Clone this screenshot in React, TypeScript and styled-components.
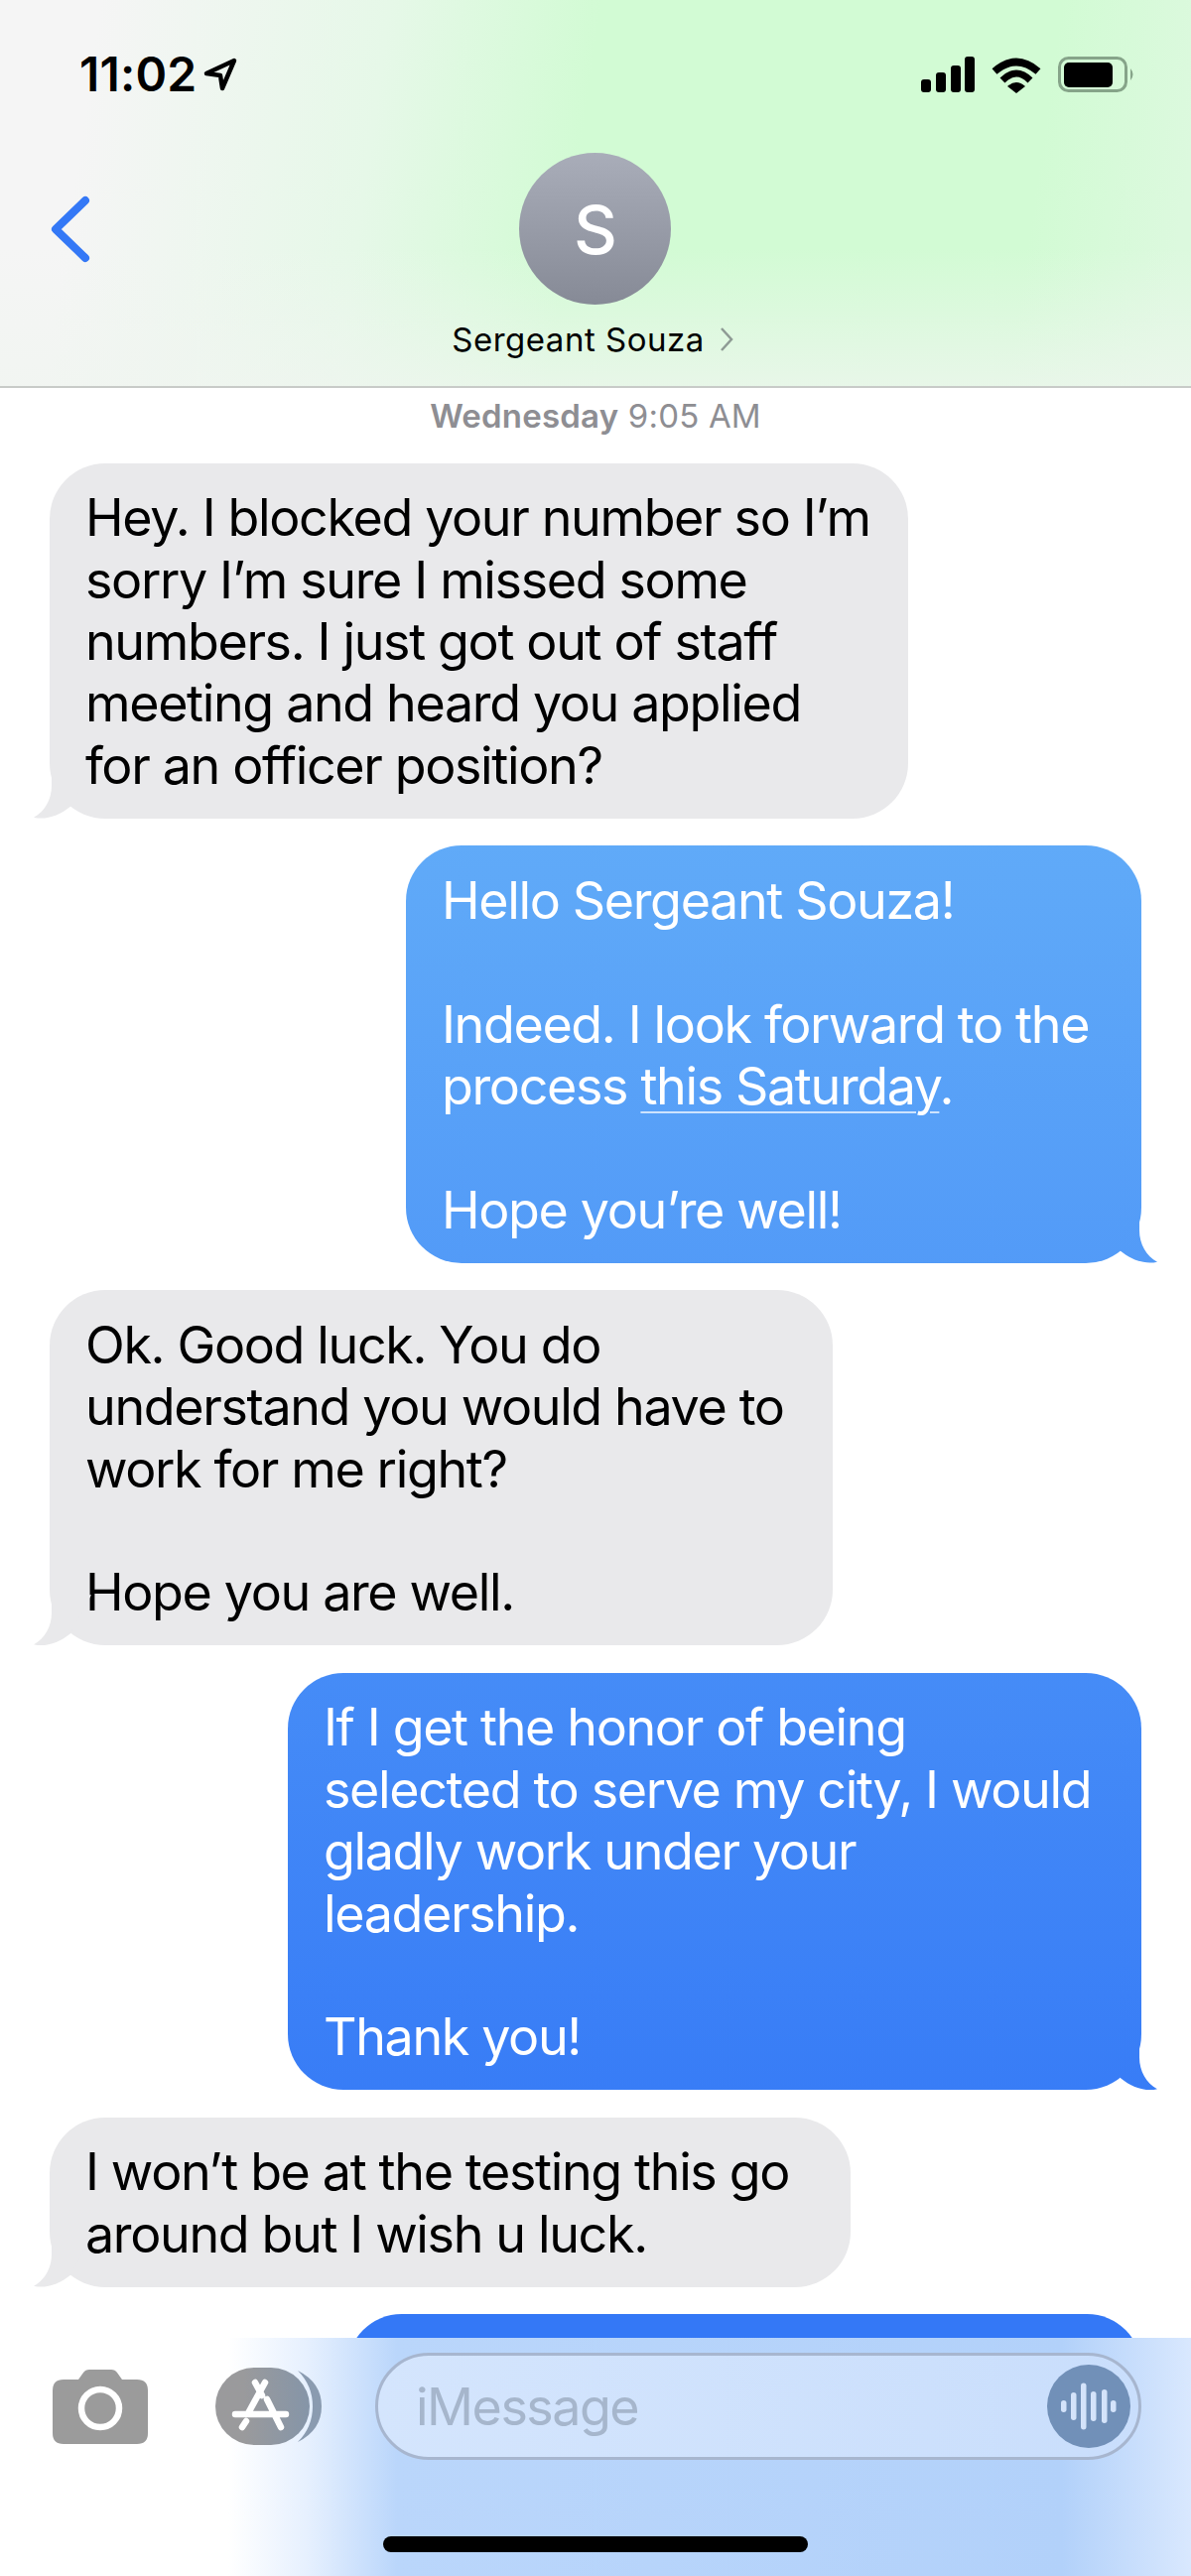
import React from "react";
import styled, { createGlobalStyle } from "styled-components";

const Global = createGlobalStyle`
  html, body { margin: 0; padding: 0; background: #fff; }
  body { font-family: Inter, "Liberation Sans", sans-serif; }
`;

const Screen = styled.div`
  width: 1200px;
  height: 2596px;
  display: flex;
  flex-direction: column;
  overflow: hidden;
  background: #fff;
`;

const Header = styled.header`
  flex: 0 0 391px;
  box-sizing: border-box;
  padding-top: 52px;
  border-bottom: 2px solid #c8cbc8;
  background:
    linear-gradient(180deg, rgba(244,246,244,0) 250px, rgba(240,245,240,0.72) 389px),
    linear-gradient(98deg, #f5f5f5 100px, #e6f8e8 390px, #d2fbd4 600px, #d2fbd4 1060px, #dcf9de 1210px);
`;

const StatusBar = styled.div`
  display: flex;
  justify-content: space-between;
  align-items: center;
  height: 46px;
  padding: 0 56px 0 80px;
  margin-bottom: 56px;
`;

const TimeGroup = styled.div`
  display: flex;
  align-items: center;
  gap: 7px;
`;

const Time = styled.span`
  font-size: 48px;
  font-weight: 600;
  letter-spacing: 0.2px;
  line-height: 46px;
  color: #000;
`;

const StatusIcons = styled.div`
  display: flex;
  align-items: center;
  gap: 17px;
`;

const Contact = styled.div`
  display: grid;
  grid-template-columns: 1fr auto 1fr;
  justify-items: center;
  align-items: center;
  row-gap: 15px;
`;

const BackButton = styled.svg`
  justify-self: start;
  margin-left: 50px;
`;

const Avatar = styled.div`
  width: 153px;
  height: 153px;
  border-radius: 50%;
  display: flex;
  align-items: center;
  justify-content: center;
  background: linear-gradient(180deg, #a9adb9, #868a96);
  color: #fff;
  font-size: 68px;
  font-weight: 500;
`;

const NameRow = styled.div`
  grid-column: 2;
  display: flex;
  align-items: center;
  gap: 15px;
  transform: translateX(-3px);
  white-space: nowrap;
`;

const Name = styled.span`
  font-size: 33px;
  letter-spacing: 0.5px;
  line-height: 40px;
  color: #000;
`;

const Thread = styled.main`
  flex: 1 1 0;
  min-height: 0;
  overflow: hidden;
  box-sizing: border-box;
  padding: 0 50px;
  display: flex;
  flex-direction: column;
  gap: 27.6px;
`;

const Stamp = styled.div`
  flex: none;
  text-align: center;
  padding-top: 8px;
  line-height: 40px;
  font-size: 33px;
  letter-spacing: 0.2px;
  color: #8e8e93;
  strong { font-weight: 600; }
`;

const tailRight = "M0 0 L40 0 L40 18 C40 32 47 44 58 50 C46 53 32 48 21 39 Z";
const tailLeft = "M60 0 L20 0 L20 18 C20 32 13 44 2 50 C14 53 28 48 39 39 Z";

const Bubble = styled.div<{ $out?: boolean; $minWidth?: number }>`
  position: relative;
  flex: none;
  box-sizing: border-box;
  width: fit-content;
  min-width: ${(p) => p.$minWidth ?? 0}px;
  padding: 24.5px 38px 21.5px 36px;
  border-radius: 56px;
  align-self: ${(p) => (p.$out ? "flex-end" : "flex-start")};
  background: ${(p) =>
    p.$out
      ? "linear-gradient(180deg, #60aaf8 850px, #3478f6 2230px) fixed"
      : "#e9e9eb"};
  color: ${(p) => (p.$out ? "#fff" : "#000")};
  font-size: 52px;
  line-height: 62.4px;
  letter-spacing: -1.36px;
  white-space: pre;

  &::after {
    content: "";
    position: absolute;
    bottom: 0;
    width: 60px;
    height: 51px;
    background: inherit;
    ${(p) => (p.$out ? "right: -18px;" : "left: -18px;")}
    clip-path: path("${(p) => (p.$out ? tailRight : tailLeft)}");
  }
`;

const DateLink = styled.span`
  text-decoration: underline;
  text-decoration-thickness: 2px;
  text-underline-offset: 7px;
  text-decoration-color: rgba(255, 255, 255, 0.7);
`;

const Toolbar = styled.footer`
  flex: 0 0 240px;
  box-sizing: border-box;
  padding-top: 15px;
  display: flex;
  flex-direction: column;
  align-items: center;
  background: linear-gradient(90deg, #fff 230px, #e6f0fe 310px, #bad6fb 400px, #b2d1fa 1070px, #d9e8fe 1200px);
`;

const ComposeRow = styled.div`
  align-self: stretch;
  display: flex;
  align-items: center;
  padding: 0 50px 0 53px;
  height: 108px;
`;

const AppsIcon = styled.svg`
  margin-left: 68px;
  margin-right: 53px;
  flex: none;
`;

const InputField = styled.div`
  flex: 1;
  height: 108px;
  box-sizing: border-box;
  border: 3.5px solid #a7b6cf;
  border-radius: 54px;
  background: linear-gradient(90deg, #d4e5fd, #c9defc);
  display: flex;
  align-items: center;
  justify-content: space-between;
  padding: 0 8px 0 38px;
`;

const Placeholder = styled.span`
  font-size: 52px;
  letter-spacing: -1.5px;
  color: #a6b6cc;
`;

const VoiceButton = styled.div`
  width: 84px;
  height: 84px;
  border-radius: 50%;
  background: #7190b8;
  display: flex;
  align-items: center;
  justify-content: center;
`;

const HomeIndicator = styled.div`
  width: 428px;
  height: 16px;
  margin-top: 77px;
  border-radius: 8px;
  background: #000;
`;

const bubbles: { out?: boolean; minWidth?: number; text: React.ReactNode }[] = [
  { text: "Hey. I blocked your number so I’m\nsorry I’m sure I missed some\nnumbers. I just got out of staff\nmeeting and heard you applied\nfor an officer position?" },
  { out: true, minWidth: 741, text: <>Hello Sergeant Souza!{"\n\n"}Indeed. I look forward to the{"\n"}process <DateLink>this Saturday</DateLink>.{"\n\n"}Hope you’re well!</> },
  { minWidth: 789, text: "Ok. Good luck. You do\nunderstand you would have to\nwork for me right?\n\nHope you are well." },
  { out: true, minWidth: 860, text: "If I get the honor of being\nselected to serve my city, I would\ngladly work under your\nleadership.\n\nThank you!" },
  { minWidth: 807, text: "I won’t be at the testing this go\naround but I wish u luck." },
];

const waveBars = [
  [0, 12], [10, 28], [20, 47], [30, 30], [41, 34], [50, 12],
];

export default function App() {
  return (
    <Screen>
      <Global />
      <Header>
        <StatusBar>
          <TimeGroup>
            <Time>11:02</Time>
            <svg width="34" height="34" viewBox="0 0 34 34">
              <path d="M31 3 L3 16 L17 18 L19 31 Z" fill="none" stroke="#000" strokeWidth="4.5" strokeLinejoin="round" />
            </svg>
          </TimeGroup>
          <StatusIcons>
            <svg width="54" height="36" viewBox="0 0 54 36">
              <rect x="0" y="23" width="10" height="13" rx="3" />
              <rect x="15" y="16" width="10" height="20" rx="3" />
              <rect x="30" y="9" width="10" height="27" rx="3" />
              <rect x="44" y="0" width="10" height="36" rx="3" />
            </svg>
            <svg width="50" height="37" viewBox="0 0 50 37">
              <path d="M3 15 Q25 -4 47 15" fill="none" stroke="#000" strokeWidth="7.5" />
              <path d="M11 24 Q25 10 39 24" fill="none" stroke="#000" strokeWidth="7" />
              <path d="M16 30 Q25 22 34 30 L25 37 Z" fill="#000" />
            </svg>
            <svg width="78" height="36" viewBox="0 0 78 36">
              <rect x="1.5" y="1.5" width="67" height="33" rx="9" fill="none" stroke="#86a489" strokeWidth="3" />
              <rect x="6" y="6" width="49" height="25" rx="5" fill="#000" />
              <path d="M73 12 Q78 18 73 24 Z" fill="#86a489" />
            </svg>
          </StatusIcons>
        </StatusBar>
        <Contact>
          <BackButton width="42" height="68" viewBox="0 0 42 68">
            <path d="M36 5 L6 34 L36 63" fill="none" stroke="#3478f6" strokeWidth="8" strokeLinecap="round" strokeLinejoin="round" />
          </BackButton>
          <Avatar>S</Avatar>
          <NameRow>
            <Name>Sergeant Souza</Name>
            <svg width="14" height="26" viewBox="0 0 14 26">
              <path d="M2 2 L12 13 L2 24" fill="none" stroke="#8e9a94" strokeWidth="2.5" />
            </svg>
          </NameRow>
        </Contact>
      </Header>
      <Thread>
        <Stamp><strong>Wednesday</strong> 9:05 AM</Stamp>
        {bubbles.map((b, i) => (
          <Bubble key={i} $out={b.out} $minWidth={b.minWidth}>{b.text}</Bubble>
        ))}
        <Bubble $out $minWidth={800}>{"\u00a0"}</Bubble>
      </Thread>
      <Toolbar>
        <ComposeRow>
          <svg width="96" height="75" viewBox="0 0 96 75" style={{ flex: "none" }}>
            <path d="M11 10 H26 L31 3 Q33 0 37 0 H59 Q63 0 65 3 L70 10 H85 Q96 10 96 21 V64 Q96 75 85 75 H11 Q0 75 0 64 V21 Q0 10 11 10 Z" fill="#9b9b9b" />
            <circle cx="48" cy="39" r="19" fill="none" stroke="#fff" strokeWidth="6.5" />
          </svg>
          <AppsIcon width="108" height="78" viewBox="0 0 108 78">
            <defs>
              <linearGradient id="apps" x1="0" x2="1" y1="0" y2="0">
                <stop offset="0.3" stopColor="#9a9a9c" />
                <stop offset="1" stopColor="#8595a8" />
              </linearGradient>
            </defs>
            <rect x="0" y="0" width="95" height="78" rx="39" fill="url(#apps)" />
            <path d="M83 3 Q107 15 107 39 Q107 63 83 75 Q98 60 98 39 Q98 18 83 3 Z" fill="#8a9bb0" />
            <path d="M50 15 L33 46 M40 15 L47 28 M52 32 L66 60 M20 47 H71 M31 54 L27 60" fill="none" stroke="#fff" strokeWidth="6.5" strokeLinecap="round" />
          </AppsIcon>
          <InputField>
            <Placeholder>iMessage</Placeholder>
            <VoiceButton>
              <svg width="56" height="50" viewBox="0 0 56 50">
                {waveBars.map(([x, h]) => (
                  <rect key={x} x={x} y={25 - h / 2} width="5.5" height={h} rx="2.75" fill="#d4e3fa" />
                ))}
              </svg>
            </VoiceButton>
          </InputField>
        </ComposeRow>
        <HomeIndicator />
      </Toolbar>
    </Screen>
  );
}
